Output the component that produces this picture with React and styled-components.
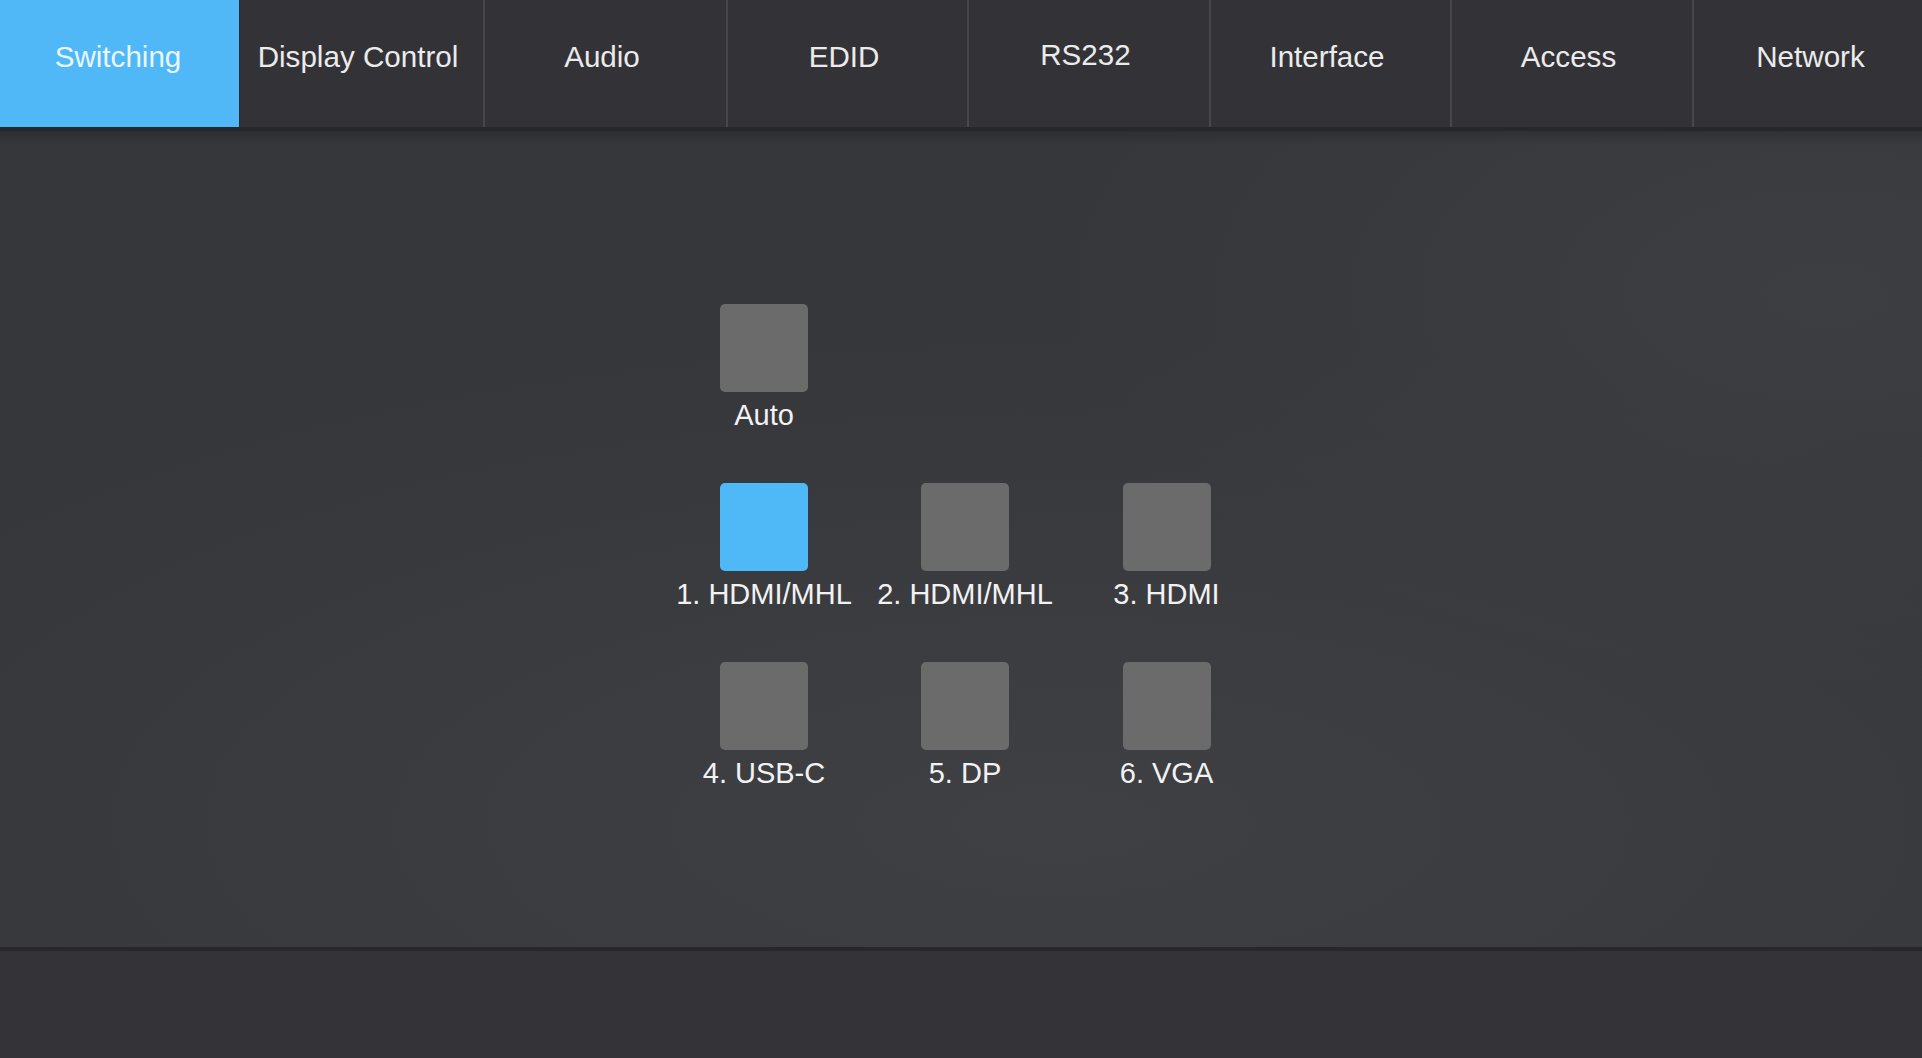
import React from 'react';
import styled, { createGlobalStyle } from 'styled-components';

const GlobalStyle = createGlobalStyle`
  html, body {
    margin: 0;
    padding: 0;
    background: #333337;
  }
  body {
    font-family: "Liberation Sans", Arial, Helvetica, sans-serif;
    overflow: hidden;
  }
`;

const tabs = [
  { label: 'Switching', width: 239, active: true },
  { label: 'Display Control', width: 244 },
  { label: 'Audio', width: 243 },
  { label: 'EDID', width: 241 },
  { label: 'RS232', width: 242, raise: 2 },
  { label: 'Interface', width: 241 },
  { label: 'Access', width: 242 },
  { label: 'Network', width: 242 },
];

const inputs = [
  [{ label: 'Auto' }],
  [{ label: '1. HDMI/MHL', active: true }, { label: '2. HDMI/MHL' }, { label: '3. HDMI' }],
  [{ label: '4. USB-C' }, { label: '5. DP' }, { label: '6. VGA' }],
];

export default function App() {
  return (
    <>
      <GlobalStyle />
      <Page>
        <TabBar>
          {tabs.map((t, i) => (
            <Tab
              key={t.label}
              $width={t.width}
              $active={t.active}
              $divider={i > 1}
              $raise={t.raise || 0}
            >
              {t.label}
            </Tab>
          ))}
        </TabBar>
        <Main>
          <InputGrid>
            {inputs.map((row, r) =>
              row.map((item, c) => (
                <Cell key={item.label} style={{ gridRow: r + 1, gridColumn: c + 1 }}>
                  <Square $active={item.active} />
                  <Label>{item.label}</Label>
                </Cell>
              ))
            )}
          </InputGrid>
        </Main>
        <Footer />
      </Page>
    </>
  );
}

const Page = styled.div`
  width: 1922px;
  height: 1058px;
  display: flex;
  flex-direction: column;
  background: #333337;
`;

const TabBar = styled.nav`
  display: flex;
  height: 127px;
  flex-shrink: 0;
  background: #333337;
  border-bottom: 4px solid #27272a;
  overflow: hidden;
`;

const Tab = styled.div`
  box-sizing: border-box;
  flex: 0 0 ${p => p.$width}px;
  display: flex;
  justify-content: center;
  align-items: flex-start;
  padding-top: ${p => 40 - p.$raise}px;
  padding-right: ${p => (p.$active ? 3 : 7)}px;
  font-size: 29.6px;
  color: ${p => (p.$active ? '#eaf6fe' : '#ebebeb')};
  background: ${p => (p.$active ? '#50b8f6' : 'transparent')};
  border-left: ${p => (p.$divider ? '2px solid #46474b' : '1px solid #2c2c30')};
  ${p => p.$active && 'border-left: none;'}
  white-space: nowrap;
  cursor: pointer;
`;

const Main = styled.main`
  box-sizing: border-box;
  height: 820px;
  flex-shrink: 0;
  padding-top: 173px;
  padding-left: 9px;
  display: flex;
  justify-content: center;
  align-items: flex-start;
  background:
    linear-gradient(180deg, rgba(30, 30, 33, 0.35) 0px, rgba(30, 30, 33, 0) 14px),
    radial-gradient(ellipse 70% 60% at 55% 85%, #3f4044 0%, rgba(63, 64, 68, 0) 100%),
    radial-gradient(ellipse 40% 50% at 95% 20%, #3d3e42 0%, rgba(61, 62, 66, 0) 100%),
    #36373b;
  border-bottom: 4px solid #28282b;
`;

const InputGrid = styled.div`
  display: grid;
  grid-template-columns: 200px 202px 201px;
  row-gap: 51px;
`;

const Cell = styled.div`
  display: flex;
  flex-direction: column;
  align-items: center;
`;

const Square = styled.div`
  width: 88px;
  height: 88px;
  border-radius: 5px;
  background: ${p => (p.$active ? '#4fb8f7' : '#6b6b6b')};
  cursor: pointer;
`;

const Label = styled.div`
  margin-top: 7px;
  font-size: 29px;
  line-height: 33px;
  color: #f2f2f2;
  white-space: nowrap;
`;

const Footer = styled.footer`
  flex: 1;
  background: #343438;
`;
